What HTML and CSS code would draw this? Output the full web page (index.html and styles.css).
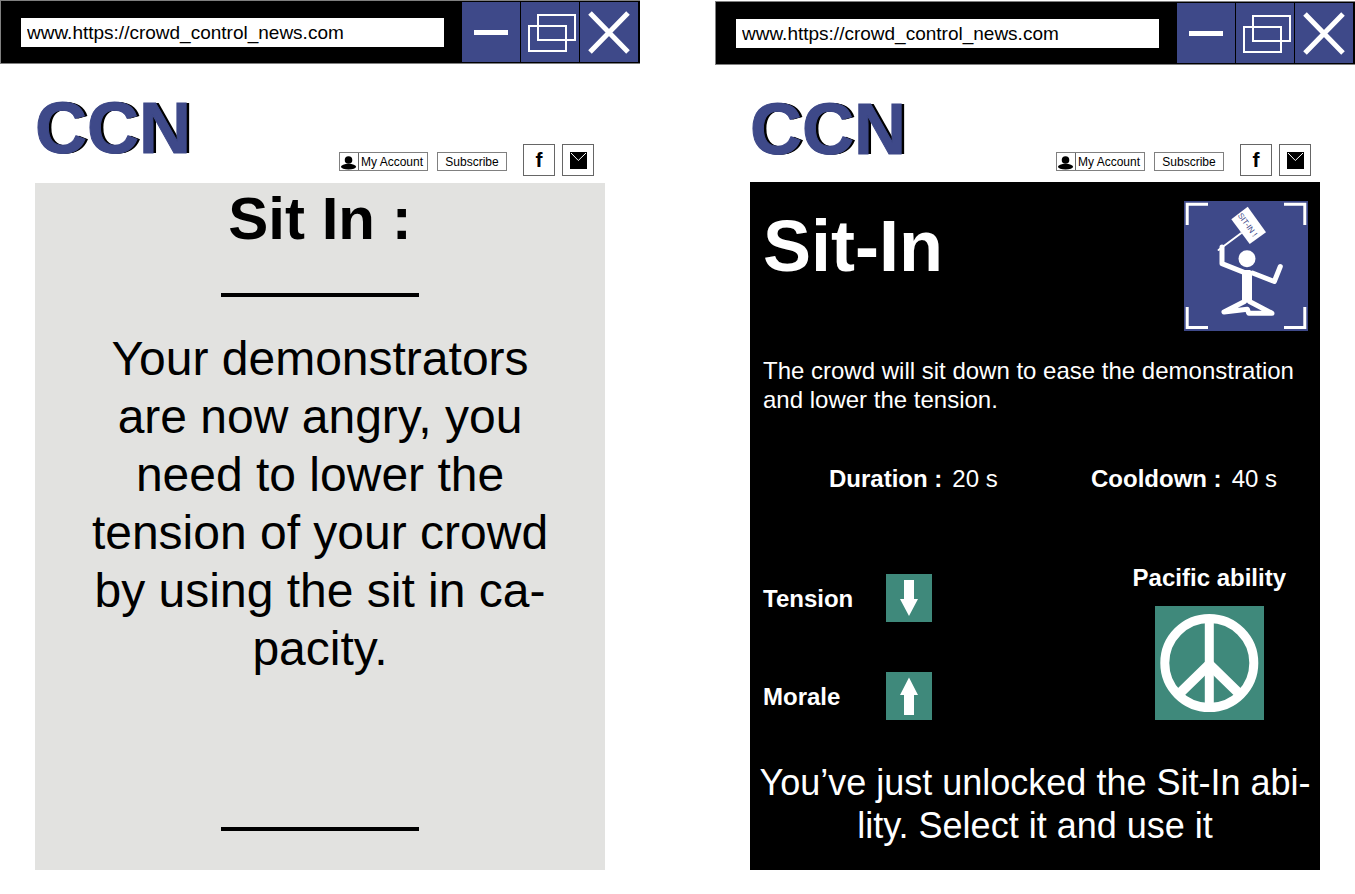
FILE: index.html
```html
<!DOCTYPE html>
<html lang="en">
<head>
<meta charset="utf-8">
<title>Crowd Control News</title>
<meta name="viewport" content="width=device-width, initial-scale=1">
<link rel="stylesheet" href="styles.css">
</head>
<body>
<main class="desktop">
  <section class="window">
    <div class="titlebar">
      <input class="address" type="text" aria-label="Address" value="www.https://crowd_control_news.com">
      <div class="controls">
        <button class="control" type="button" aria-label="Minimize"><svg width="58" height="60" viewBox="0 0 58 60"><rect x="12" y="28" width="34" height="5" fill="#fff"/></svg></button>
        <button class="control" type="button" aria-label="Restore"><svg width="58" height="60" viewBox="0 0 58 60" fill="none" stroke="#fff" stroke-width="2"><rect x="17" y="13" width="37" height="25"/><rect x="8" y="24" width="37" height="25"/></svg></button>
        <button class="control" type="button" aria-label="Close"><svg width="58" height="60" viewBox="0 0 58 60" stroke="#fff" stroke-width="5"><path d="M10 11L48 50M48 11L10 50"/></svg></button>
      </div>
    </div>
    <header class="site-header">
      <div class="logo">CCN</div>
      <nav class="site-nav">
        <button class="nav-button account" type="button"><svg class="person" width="19" height="17" viewBox="0 0 19 17"><circle cx="9" cy="7" r="4"/><ellipse cx="9" cy="14" rx="8" ry="3"/></svg><span class="account-label">My Account</span></button>
        <button class="nav-button subscribe" type="button">Subscribe</button>
        <button class="social facebook" type="button" aria-label="Facebook">f</button>
        <button class="social" type="button" aria-label="Mail"><svg width="30" height="30" viewBox="0 0 30 30"><rect x="7" y="7" width="17" height="17"/><path d="M8 8L15.300 15.500L23 8" fill="none" stroke="#fff"/></svg></button>
      </nav>
    </header>
    <article class="panel panel-light">
      <h1 class="notice-title">Sit In :</h1>
      <hr class="rule">
      <p class="notice-text">Your demonstrators are now angry, you need to lower the tension of your crowd by using the sit in ca&shy;pacity.</p>
      <hr class="rule rule-last">
    </article>
  </section>

  <section class="window window-ability">
    <div class="titlebar">
      <input class="address" type="text" aria-label="Address" value="www.https://crowd_control_news.com">
      <div class="controls">
        <button class="control" type="button" aria-label="Minimize"><svg width="58" height="60" viewBox="0 0 58 60"><rect x="12" y="28" width="34" height="5" fill="#fff"/></svg></button>
        <button class="control" type="button" aria-label="Restore"><svg width="58" height="60" viewBox="0 0 58 60" fill="none" stroke="#fff" stroke-width="2"><rect x="17" y="13" width="37" height="25"/><rect x="8" y="24" width="37" height="25"/></svg></button>
        <button class="control" type="button" aria-label="Close"><svg width="58" height="60" viewBox="0 0 58 60" stroke="#fff" stroke-width="5"><path d="M10 11L48 50M48 11L10 50"/></svg></button>
      </div>
    </div>
    <header class="site-header">
      <div class="logo">CCN</div>
      <nav class="site-nav">
        <button class="nav-button account" type="button"><svg class="person" width="19" height="17" viewBox="0 0 19 17"><circle cx="9" cy="7" r="4"/><ellipse cx="9" cy="14" rx="8" ry="3"/></svg><span class="account-label">My Account</span></button>
        <button class="nav-button subscribe" type="button">Subscribe</button>
        <button class="social facebook" type="button" aria-label="Facebook">f</button>
        <button class="social" type="button" aria-label="Mail"><svg width="30" height="30" viewBox="0 0 30 30"><rect x="7" y="7" width="17" height="17"/><path d="M8 8L15.300 15.500L23 8" fill="none" stroke="#fff"/></svg></button>
      </nav>
    </header>
    <article class="panel panel-dark">
      <div class="ability">
        <div class="ability-head">
          <h2 class="ability-title">Sit-In</h2>
          <svg class="badge" width="124" height="130" viewBox="0 0 124 130" fill="none" stroke="#fff" stroke-linecap="round" stroke-linejoin="round">
            <g stroke-width="3" stroke-linecap="butt" stroke-linejoin="miter"><path d="M24 3.200H3.200V24M100 3.200H120.800V24M3.200 106V126.500H24M120.800 106V126.500H100"/></g>
            <path d="M63.700 5.700L82 31.300L65.700 43L47.300 18.300Z" fill="#fff" stroke="none"/>
            <text class="sign" transform="translate(53.400 14.400) rotate(54)">SIT-IN !</text>
            <path d="M57 32.300L34.500 49" stroke-width="2"/>
            <circle cx="63" cy="57.700" r="8.500" fill="#fff" stroke="none"/>
            <path d="M38 46V62.700L60 71.300M68.500 72L90.300 80.500L96.300 65.500" stroke-width="5"/>
            <path d="M58 70.500L60 69H66L68 70.500V101H58Z" fill="#fff" stroke="none"/>
            <path d="M60.500 100.500L40 111L63.300 108.200L64.700 112.200H88L65.500 100.500" stroke-width="5"/>
          </svg>
        </div>
        <p class="ability-text">The crowd will sit down to ease the demonstration and lower the tension.</p>
        <div class="timings">
          <div class="timing"><b>Duration :</b><span>20 s</span></div>
          <div class="timing"><b>Cooldown :</b><span>40 s</span></div>
        </div>
        <div class="effects">
          <div class="stats">
            <div class="stat"><b class="stat-name">Tension</b><svg class="tile" width="46" height="48" viewBox="0 0 46 48"><path d="M18 6H28V25H32L23 42L14 25H18Z" fill="#fff"/></svg></div>
            <div class="stat"><b class="stat-name">Morale</b><svg class="tile" width="46" height="48" viewBox="0 0 46 48"><path d="M18 43H28V23H32L23 5.500L14 23H18Z" fill="#fff"/></svg></div>
          </div>
          <div class="kind">
            <b>Pacific ability</b>
            <svg class="tile" width="109" height="114" viewBox="0 0 109 114" fill="none" stroke="#fff" stroke-width="9"><circle cx="54.300" cy="57" r="44.500"/><path d="M54.300 13V101"/><path d="M25 87L54.300 58.500L83.600 87" stroke-width="10"/></svg>
          </div>
        </div>
      </div>
      <p class="unlocked">You’ve just unlocked the Sit-In abi&shy;lity. Select it and use it</p>
    </article>
  </section>
</main>
</body>
</html>
```
FILE: styles.css
```css
* {
  box-sizing: border-box;
}

body {
  margin: 0;
  background: #fff;
  color: #000;
  font-family: "Liberation Sans", Arial, sans-serif;
}

h1, h2, p {
  margin: 0;
}

svg {
  display: block;
  flex: none;
}

button, input {
  margin: 0;
  padding: 0;
  border-radius: 0;
  color: inherit;
  font-family: inherit;
}

.desktop {
  display: grid;
  grid-template-columns: 1fr 1fr;
  gap: 75px;
  min-height: 100vh;
}

.window {
  display: flex;
  flex-direction: column;
  min-width: 0;
  padding-bottom: 24px;
}

.window-ability {
  padding-top: 1px;
}

.titlebar {
  display: flex;
  align-items: center;
  gap: 18px;
  padding: 1px 2px 1px 20px;
  border: 1px solid #808080;
  border-right: 0;
  background: #000;
}

.address {
  flex: 1;
  min-width: 0;
  height: 29px;
  padding: 2px 6px 0;
  border: 0;
  background: #fff;
  font-size: 19px;
}

.controls {
  display: flex;
  gap: 1px;
}

.control {
  border: 0;
  background: #3e4989;
}

.site-header {
  display: flex;
  justify-content: space-between;
  align-items: flex-end;
  padding: 28px 46px 7px 35px;
}

.window-ability .site-header {
  padding: 28px 44px 6px 35px;
}

.logo {
  margin-bottom: 12px;
  color: #3e4989;
  font-size: 72px;
  font-weight: bold;
  line-height: 72px;
  text-shadow: 1px 0 #000, 2px 0 #000, 3px 0 #000;
  -webkit-text-stroke: 1px #3e4989;
}

.window-ability .logo {
  margin-bottom: 11px;
}

.site-nav {
  display: flex;
  align-items: flex-end;
}

.nav-button {
  display: flex;
  height: 19px;
  margin-bottom: 5px;
  border: 1px solid #808080;
  background: #fff;
  font-size: 12px;
  line-height: 18px;
}

.account {
  width: 89px;
  margin-right: 9px;
}

.person {
  border-right: 1px solid #666;
}

.account-label {
  padding-left: 2px;
  white-space: nowrap;
}

.subscribe {
  justify-content: center;
  width: 70px;
  margin-right: 16px;
}

.social {
  width: 32px;
  height: 32px;
  border: 1px solid #666;
  background: #fff;
}

.facebook {
  margin-right: 7px;
  font-size: 21px;
  font-weight: bold;
  line-height: 30px;
}

.panel {
  display: flex;
  flex: 1;
  flex-direction: column;
  margin: 0 35px;
}

.panel-light {
  padding-bottom: 39px;
  background: #e2e2e0;
  text-align: center;
}

.notice-title {
  font-size: 60px;
  line-height: 72px;
}

.rule {
  width: 198px;
  height: 4px;
  margin: 38px auto 33px;
  border: 0;
  background: #000;
}

.notice-text {
  padding: 0 50px;
  font-size: 48px;
  line-height: 58px;
}

.rule-last {
  margin: auto auto 0;
}

.panel-dark {
  background: #000;
  color: #fff;
}

.ability {
  padding: 19px 12px 0 13px;
  font-size: 24px;
  line-height: 29px;
}

.ability-head {
  display: flex;
  justify-content: space-between;
}

.ability-title {
  margin-top: 9px;
  font-size: 72px;
  line-height: 72px;
}

.badge {
  background: #3e4989;
}

.sign {
  fill: #3e4989;
  stroke: none;
  font-size: 8px;
}

.ability-text {
  margin-top: 25px;
}

.timings {
  display: flex;
  justify-content: space-between;
  margin-top: 50px;
  padding: 0 31px 0 66px;
}

.timing {
  display: flex;
  gap: 10px;
}

.effects {
  display: flex;
  justify-content: space-between;
  align-items: flex-end;
  margin-top: 70px;
  padding-right: 22px;
}

.stats {
  display: grid;
  gap: 50px;
}

.stat {
  display: flex;
  align-items: center;
}

.stat-name {
  width: 123px;
}

.kind {
  display: flex;
  flex-direction: column;
  align-items: center;
  gap: 14px;
}

.tile {
  background: #3f897b;
}

.unlocked {
  margin-top: 41px;
  padding: 0 8px;
  font-size: 36px;
  line-height: 43px;
  text-align: center;
}
```
